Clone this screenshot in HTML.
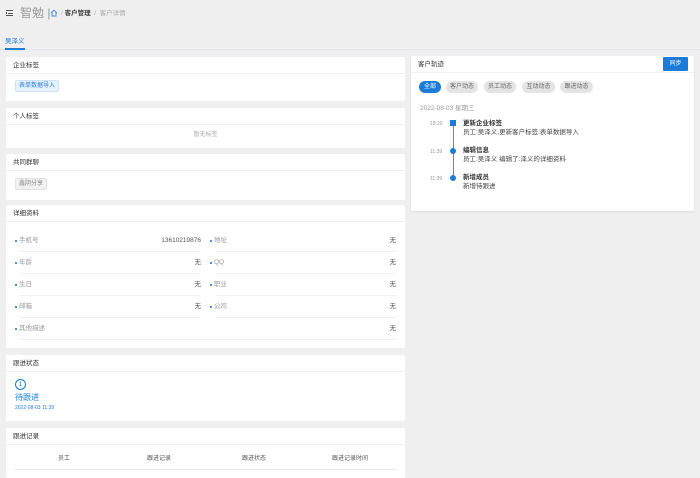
<!DOCTYPE html>
<html><head><meta charset="utf-8"><style>
*{margin:0;padding:0;box-sizing:border-box}
body{width:700px;height:474px;overflow:hidden;background:#efeff0;font-family:"Liberation Sans","Noto Sans CJK SC",sans-serif;font-size:6.5px;line-height:9px;color:#333;position:relative}
.a{position:absolute;white-space:nowrap}
.card{position:absolute;background:#fff;border-radius:2px}
.hd{position:absolute;left:0;right:0;top:0;height:17px;border-bottom:1px solid #eef0f5;padding:4px 7px;font-size:6.5px;line-height:9px;color:#333}
.tag{position:absolute;font-size:6px;line-height:8px;border-radius:2px;padding:1px 3px}
.lbl{position:absolute;color:#999;font-size:6.5px;line-height:9px}
.lbl:before{content:"";position:absolute;left:-4px;top:4px;width:2px;height:2px;background:#4a90e2}
.val{position:absolute;font-size:6.5px;line-height:9px;color:#555;text-align:right}
.ln{position:absolute;height:1px;background:#f0f0f2}
.pill{position:absolute;top:81px;height:12px;border-radius:6px;background:#e4e4e4;color:#666;font-size:6px;line-height:12px;text-align:center}
</style></head><body>
<div class="a" style="left:6px;top:10px;width:7px;height:6px">
<div class="a" style="left:0;top:0;width:7px;height:1px;background:#555"></div>
<div class="a" style="left:2px;top:2.5px;width:5px;height:1px;background:#555"></div>
<div class="a" style="left:0;top:5px;width:7px;height:1px;background:#555"></div>
<div class="a" style="left:0;top:2px;width:1px;height:2px;background:#555"></div>
</div>
<div class="a" style="left:20px;top:5px;font-size:12px;line-height:16px;color:#999">智勉 |</div>
<svg class="a" style="left:50px;top:9px" width="8" height="8" viewBox="0 0 8 8"><path d="M1 4 L4 1.3 L7 4 M2 3.2 V7 H6 V3.2" fill="none" stroke="#4a90e2" stroke-width="1"/></svg>
<div class="a" style="left:61px;top:9px;font-size:6.5px;color:#aaa">/ <b style="color:#444;font-weight:bold">客户管理</b> &nbsp;/ &nbsp;<span style="color:#aaa">客户详情</span></div>
<div class="a" style="left:5px;top:37px;font-size:6.5px;color:#1a7bd8">吴泽义</div>
<div class="a" style="left:0;top:49px;width:700px;height:1px;background:#dfe3ea"></div>
<div class="a" style="left:5px;top:48px;width:20px;height:2px;background:#1a7bd8"></div>

<div class="card" style="left:6px;top:57px;width:399px;height:44px"><div class="hd">企业标签</div>
<div class="tag" style="left:9px;top:23px;background:#e8f2fd;border:1px solid #cfe3f8;color:#2a7bd3">表单数据导入</div></div>

<div class="card" style="left:6px;top:108px;width:399px;height:40px"><div class="hd">个人标签</div>
<div class="a" style="left:0;right:0;top:23px;text-align:center;color:#aaa;font-size:6px">暂无标签</div></div>

<div class="card" style="left:6px;top:154px;width:399px;height:46px"><div class="hd">共同群聊</div>
<div class="tag" style="left:9px;top:24px;background:#f2f2f2;border:1px solid #e2e2e2;color:#888">鑫阴分享</div></div>

<div class="card" style="left:6px;top:205px;width:399px;height:143px"><div class="hd">详细资料</div></div>
<div class="lbl" style="left:19px;top:236px">手机号</div><div class="val" style="left:120px;width:81px;top:236px">13610219876</div>
<div class="lbl" style="left:214px;top:236px">地址</div><div class="val" style="left:300px;width:96px;top:236px">无</div>
<div class="ln" style="left:20px;width:181px;top:251px"></div><div class="ln" style="left:215px;width:181px;top:251px"></div>
<div class="lbl" style="left:19px;top:258px">年龄</div><div class="val" style="left:120px;width:81px;top:258px">无</div>
<div class="lbl" style="left:214px;top:258px">QQ</div><div class="val" style="left:300px;width:96px;top:258px">无</div>
<div class="ln" style="left:20px;width:181px;top:273px"></div><div class="ln" style="left:215px;width:181px;top:273px"></div>
<div class="lbl" style="left:19px;top:280px">生日</div><div class="val" style="left:120px;width:81px;top:280px">无</div>
<div class="lbl" style="left:214px;top:280px">职业</div><div class="val" style="left:300px;width:96px;top:280px">无</div>
<div class="ln" style="left:20px;width:181px;top:295px"></div><div class="ln" style="left:215px;width:181px;top:295px"></div>
<div class="lbl" style="left:19px;top:302px">邮箱</div><div class="val" style="left:120px;width:81px;top:302px">无</div>
<div class="lbl" style="left:214px;top:302px">公司</div><div class="val" style="left:300px;width:96px;top:302px">无</div>
<div class="ln" style="left:20px;width:181px;top:317px"></div><div class="ln" style="left:215px;width:181px;top:317px"></div>
<div class="lbl" style="left:19px;top:324px">其他描述</div><div class="val" style="left:300px;width:96px;top:324px">无</div>
<div class="ln" style="left:20px;width:376px;top:339px"></div>

<div class="card" style="left:6px;top:355px;width:399px;height:66px"><div class="hd">跟进状态</div>
<div class="a" style="left:9px;top:24px;width:11px;height:11px;border:1px solid #1a7bd8;border-radius:50%;color:#1a7bd8;font-size:6.5px;text-align:center;line-height:9px">1</div>
<div class="a" style="left:9px;top:37px;font-size:8px;line-height:11px;color:#1a7bd8">待跟进</div>
<div class="a" style="left:9px;top:50px;font-size:5px;line-height:7px;color:#1a7bd8">2022-08-03 11:39</div></div>

<div class="card" style="left:6px;top:428px;width:399px;height:50px"><div class="hd">跟进记录</div>
<div class="a" style="left:52px;top:27px;font-size:6px;color:#555">员工</div>
<div class="a" style="left:141px;top:27px;font-size:6px;color:#555">跟进记录</div>
<div class="a" style="left:236px;top:27px;font-size:6px;color:#555">跟进状态</div>
<div class="a" style="left:326px;top:27px;font-size:6px;color:#555">跟进记录时间</div>
<div class="ln" style="left:9px;width:381px;top:41px;background:#e8e8ec"></div></div>

<div class="card" style="left:411px;top:56px;width:283px;height:155px;box-shadow:0 1px 2px rgba(0,0,0,.08)"><div class="hd">客户轨迹</div>
<div class="a" style="left:252px;top:1px;width:25px;height:14px;background:#1a7bd8;border-radius:1px;color:#fff;font-size:6px;text-align:center;line-height:14px">同步</div></div>
<div class="pill" style="left:419px;width:22px;background:#1a7bd8;color:#fff">全部</div>
<div class="pill" style="left:446px;width:32px">客户动态</div>
<div class="pill" style="left:484px;width:32px">员工动态</div>
<div class="pill" style="left:522px;width:33px">互动动态</div>
<div class="pill" style="left:560px;width:33px">跟进动态</div>
<div class="a" style="left:420px;top:104px;font-size:6.5px;color:#999">2022-08-03 星期三</div>
<div class="a" style="left:453px;top:124px;width:1px;height:54px;background:#4a90e2"></div>
<div class="a" style="left:450px;top:120px;width:6px;height:6px;background:#1a7bd8"></div>
<div class="a" style="left:450px;top:148px;width:6px;height:6px;border-radius:50%;background:#1a7bd8"></div>
<div class="a" style="left:450px;top:175px;width:6px;height:6px;border-radius:50%;background:#1a7bd8"></div>
<div class="a" style="left:430px;top:120px;font-size:5px;color:#999">18:20</div>
<div class="a" style="left:430px;top:148px;font-size:5px;color:#999">11:39</div>
<div class="a" style="left:430px;top:175px;font-size:5px;color:#999">11:39</div>
<div class="a" style="left:463px;top:119px;font-size:6.5px;font-weight:bold;color:#333">更新企业标签</div>
<div class="a" style="left:463px;top:128px;font-size:6.5px;color:#444">员工:吴泽义,更新客户标签:表单数据导入</div>
<div class="a" style="left:463px;top:146px;font-size:6.5px;font-weight:bold;color:#333">编辑信息</div>
<div class="a" style="left:463px;top:155px;font-size:6.5px;color:#444">员工:吴泽义 编辑了:泽义的详细资料</div>
<div class="a" style="left:463px;top:173px;font-size:6.5px;font-weight:bold;color:#333">新增成员</div>
<div class="a" style="left:463px;top:182px;font-size:6.5px;color:#444">新增待跟进</div>
</body></html>
